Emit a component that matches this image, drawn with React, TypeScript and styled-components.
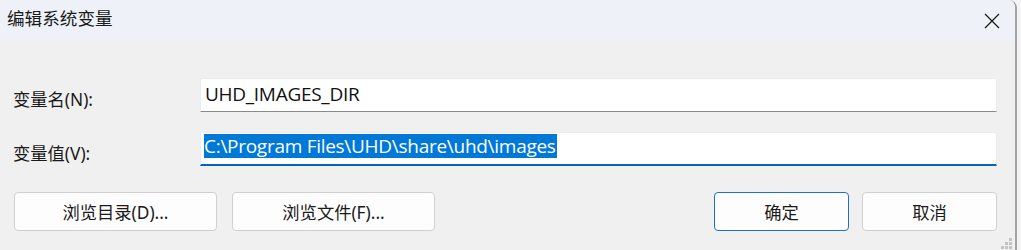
import React from "react";
import styled, { createGlobalStyle } from "styled-components";

const GlobalStyle = createGlobalStyle`
  html, body { margin: 0; padding: 0; background: #f4f4f4; }
  body { width: 1021px; height: 250px; overflow: hidden; }
  * { box-sizing: border-box; }
`;

const cjk = `"Noto Sans", "Noto Sans CJK SC", sans-serif`;

const Window = styled.div`
  width: 1017px;
  height: 250px;
  display: flex;
  flex-direction: column;
  background: #f0f0f0;
  border-right: 2px solid #a3a3a3;
  border-top-right-radius: 8px;
  overflow: hidden;
  position: relative;
  font-family: ${cjk};
  color: #1a1a1a;
`;

const TitleBar = styled.div`
  height: 41px;
  flex: none;
  display: flex;
  align-items: center;
  justify-content: space-between;
  background: #eef2f8;
  padding: 0 15px 3px 7px;
`;

const Title = styled.div`
  font-size: 17.6px;
  line-height: 1;
  color: #1b1b1b;
`;

const CloseIcon = styled.svg`
  width: 16px;
  height: 16px;
  margin-top: 4px;
`;

const Body = styled.div`
  flex: 1;
  display: flex;
  flex-direction: column;
  padding: 37px 18px 0 13px;
`;

const FieldRow = styled.div`
  display: flex;
  align-items: center;
  height: 34px;
  margin-bottom: 20px;
`;

const Label = styled.div`
  width: 187px;
  font-size: 17.3px;
  color: #1a1a1a;
  padding-top: 6px;
`;

const Input = styled.div<{ $active?: boolean }>`
  width: 797px;
  height: 34px;
  background: #ffffff;
  border: 1px solid #ececec;
  border-bottom: ${(p) => (p.$active ? "2px solid #0067c0" : "1px solid #8a8a8a")};
  border-radius: 2px 2px 0 0;
  display: flex;
  align-items: center;
  padding-left: ${(p) => (p.$active ? "3px" : "4px")};
  font-family: "Open Sans", "Noto Sans", sans-serif;
  font-size: 19px;
  letter-spacing: -0.28px;
  white-space: nowrap;
`;

const Selection = styled.span`
  background: #0078d7;
  color: #ffffff;
  height: 24px;
  line-height: 24px;
  padding-right: 1px;
  margin-bottom: 6px;
`;

const PlainText = styled.span`
  color: #111;
  margin-bottom: 2px;
`;

const ButtonRow = styled.div`
  display: flex;
  align-items: center;
  margin-top: 6px;
  padding-left: 1px;
`;

const Button = styled.button<{ $wide?: boolean; $primary?: boolean; $gap?: number }>`
  width: ${(p) => (p.$wide ? "203px" : "135px")};
  height: 39px;
  margin-left: ${(p) => p.$gap ?? 0}px;
  background: #fdfdfd;
  border: 1px solid ${(p) => (p.$primary ? "#1a73c8" : "#d0d0d0")};
  border-radius: 4px;
  font-family: ${cjk};
  font-size: 17.3px;
  color: #1a1a1a;
  padding: 0;
  display: flex;
  align-items: center;
  justify-content: center;
`;

const Spacer = styled.div`
  flex: 1;
`;

const Grip = styled.svg`
  position: absolute;
  right: 2px;
  bottom: 0;
  width: 14px;
  height: 12px;
`;

export default function App() {
  return (
    <>
      <GlobalStyle />
      <Window>
        <TitleBar>
          <Title>编辑系统变量</Title>
          <CloseIcon viewBox="0 0 16 16">
            <path d="M1 1 L15 15 M15 1 L1 15" stroke="#1a1a1a" strokeWidth="1.3" fill="none" />
          </CloseIcon>
        </TitleBar>
        <Body>
          <FieldRow>
            <Label>变量名(N):</Label>
            <Input>
              <PlainText>UHD_IMAGES_DIR</PlainText>
            </Input>
          </FieldRow>
          <FieldRow>
            <Label>变量值(V):</Label>
            <Input $active>
              <Selection>C:\Program Files\UHD\share\uhd\images</Selection>
            </Input>
          </FieldRow>
          <ButtonRow>
            <Button $wide>浏览目录(D)...</Button>
            <Button $wide $gap={15}>浏览文件(F)...</Button>
            <Spacer />
            <Button $primary>确定</Button>
            <Button $gap={13}>取消</Button>
          </ButtonRow>
        </Body>
        <Grip viewBox="0 0 14 12">
          <rect x="10" y="0" width="3" height="3" fill="#c4c4c4" />
          <rect x="6" y="4" width="3" height="3" fill="#c4c4c4" />
          <rect x="10" y="4" width="3" height="3" fill="#c4c4c4" />
          <rect x="2" y="8" width="3" height="3" fill="#c4c4c4" />
          <rect x="6" y="8" width="3" height="3" fill="#c4c4c4" />
          <rect x="10" y="8" width="3" height="3" fill="#c4c4c4" />
        </Grip>
      </Window>
    </>
  );
}
